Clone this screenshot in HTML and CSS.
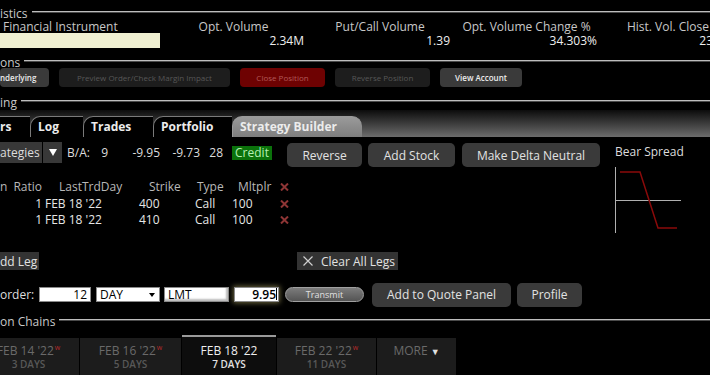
FILE: index.html
```html
<!DOCTYPE html>
<html lang="en">
<head>
  <meta charset="UTF-8">
  <meta name="viewport" content="width=device-width,initial-scale=1">
  <title>Strategy Builder</title>
  <link rel="stylesheet" href="styles.css">
</head>
<body>
  <div class="app">
    <!-- statistics strip -->
    <div class="sec sec-stats"><span>istics</span><i class="rule"></i></div>
    <div class="stats">
      <div class="stat stat-first">
        <div class="stat-label">Financial Instrument</div>
        <div class="instr-box"></div>
      </div>
      <div class="stat">
        <div class="stat-label">Opt. Volume</div>
        <div class="stat-val">2.34M</div>
      </div>
      <div class="stat">
        <div class="stat-label">Put/Call Volume</div>
        <div class="stat-val">1.39</div>
      </div>
      <div class="stat">
        <div class="stat-label">Opt. Volume Change %</div>
        <div class="stat-val">34.303%</div>
      </div>
      <div class="stat">
        <div class="stat-label">Hist. Vol. Close</div>
        <div class="stat-val">23.6%</div>
      </div>
    </div>

    <!-- actions -->
    <div class="sec sec-actions"><span>ons</span><i class="rule"></i></div>
    <div class="actions">
      <button class="act act-on w-und">nderlying</button>
      <button class="act act-off w-prev">Preview Order/Check Margin Impact</button>
      <button class="act act-close">Close Position</button>
      <button class="act act-off w-rev">Reverse Position</button>
      <button class="act act-on w-view">View Account</button>
    </div>

    <!-- trading -->
    <div class="sec sec-trading"><span>ing</span><i class="rule"></i></div>
    <div class="tabs">
      <div class="tab tab-cut">rs</div>
      <div class="tab w-log">Log</div>
      <div class="tab w-trades">Trades</div>
      <div class="tab w-port">Portfolio</div>
      <div class="tab active">Strategy Builder</div>
    </div>

    <div class="builder">
      <div class="builder-main">
        <div class="strat-row">
          <div class="drop">ategies</div>
          <div class="drop-arrow">
            <svg width="8" height="7" viewBox="0 0 8 7"><polygon points="0,0 8,0 4,7" fill="#fff"/></svg>
          </div>
          <span class="ba-label">B/A:</span>
          <span class="ba ba-1">9</span>
          <span class="ba ba-2">-9.95</span>
          <span class="ba ba-3">-9.73</span>
          <span class="ba ba-4">28</span>
          <span class="credit">Credit</span>
          <button class="sb-btn w-reverse">Reverse</button>
          <button class="sb-btn w-stock">Add Stock</button>
          <button class="sb-btn w-delta">Make Delta Neutral</button>
        </div>

        <div class="legs">
          <div class="lh">n</div>
          <div class="lh r">Ratio</div>
          <div class="lh h-date">LastTrdDay</div>
          <div class="lh h-strike">Strike</div>
          <div class="lh h-type">Type</div>
          <div class="lh h-mult">Mltplr</div>
          <div class="lh"><svg class="del" width="9" height="8" viewBox="0 0 9 8"><path d="M1 0.5 L8 7.5 M8 0.5 L1 7.5" stroke="#8e3535" stroke-width="2"/></svg></div>

          <div></div>
          <div class="r">1</div>
          <div class="v-date">FEB 18 '22</div>
          <div>400</div>
          <div>Call</div>
          <div>100</div>
          <div><svg class="del" width="9" height="8" viewBox="0 0 9 8"><path d="M1 0.5 L8 7.5 M8 0.5 L1 7.5" stroke="#8e3535" stroke-width="2"/></svg></div>

          <div></div>
          <div class="r">1</div>
          <div class="v-date">FEB 18 '22</div>
          <div>410</div>
          <div>Call</div>
          <div>100</div>
          <div><svg class="del" width="9" height="8" viewBox="0 0 9 8"><path d="M1 0.5 L8 7.5 M8 0.5 L1 7.5" stroke="#8e3535" stroke-width="2"/></svg></div>
        </div>
      </div>

      <div class="profile">
        <div class="profile-title">Bear Spread</div>
        <svg width="72" height="70" viewBox="0 0 72 70">
          <line x1="3.5" y1="1" x2="3.5" y2="67" stroke="#b0b0b0" stroke-width="1"/>
          <line x1="4" y1="34.5" x2="69" y2="34.5" stroke="#b0b0b0" stroke-width="1"/>
          <polyline points="8,6 28,6 46,62 65,62" fill="none" stroke="#8a0a0a" stroke-width="1.5"/>
        </svg>
      </div>
    </div>

    <div class="leg-row">
      <button class="leg-btn">dd Leg</button>
      <button class="leg-btn clear">
        <svg width="10" height="10" viewBox="0 0 10 10"><path d="M0.5 0.5 L9.5 9.5 M9.5 0.5 L0.5 9.5" stroke="#d0d0d0" stroke-width="1.2"/></svg>
        Clear All Legs
      </button>
    </div>

    <div class="order-row">
      <span class="order-label">order:</span>
      <div class="fld fld-qty">12</div>
      <div class="fld fld-tif">DAY
        <svg width="6" height="4" viewBox="0 0 6 4"><polygon points="0,0 6,0 3,4" fill="#000"/></svg>
      </div>
      <div class="fld fld-type">LMT</div>
      <div class="fld fld-price">9.95<i class="caret"></i></div>
      <button class="transmit">Transmit</button>
      <button class="sb-btn w-quote">Add to Quote Panel</button>
      <button class="sb-btn w-profile">Profile</button>
    </div>

    <!-- option chains -->
    <div class="sec sec-chains"><span>on Chains</span><i class="rule"></i></div>
    <div class="expiries">
      <div class="exp w-101">
        <div class="exp-date">FEB 14 '22<sup class="wk">w</sup></div>
        <div class="exp-days">3 DAYS</div>
      </div>
      <div class="exp w-101">
        <div class="exp-date">FEB 16 '22<sup class="wk">w</sup></div>
        <div class="exp-days">5 DAYS</div>
      </div>
      <div class="exp exp-active">
        <div class="exp-date">FEB 18 '22</div>
        <div class="exp-days">7 DAYS</div>
      </div>
      <div class="exp w-99">
        <div class="exp-date">FEB 22 '22<sup class="wk">w</sup></div>
        <div class="exp-days">11 DAYS</div>
      </div>
      <div class="exp exp-more">
        <div class="exp-date">MORE <span class="more-arrow">&#9660;</span></div>
      </div>
    </div>
  </div>
</body>
</html>
```

FILE: styles.css
```css
body { margin: 0; background: #000; color: #ddd; font-family: "Open Sans", "Liberation Sans", sans-serif; font-size: 12px; overflow: hidden; }
.app { width: 710px; height: 375px; overflow: hidden; }
button { font-family: inherit; padding: 0; border: 0; cursor: pointer; }

/* section titles with a rule */
.sec { display: flex; align-items: center; gap: 4px; height: 14px; color: #c8c8c8; white-space: nowrap; }
.sec span { margin-top: 2px; }
.sec .rule { flex: 1; height: 0; border-top: 1px solid #bdbdbd; border-bottom: 1px solid #4a4a4a; }
.sec-stats { margin-top: 5px; }
.sec-actions { margin-top: 6px; }
.sec-trading { margin-top: 7px; }
.sec-chains { margin-top: 6px; }

/* statistics */
.stats { display: grid; grid-template-columns: 160px 147px 146px 147px 136px; }
.stat-label { height: 14px; line-height: 15px; text-align: center; color: #c8c8c8; white-space: nowrap; }
.stat-first .stat-label { text-align: left; padding-left: 3px; }
.stat-val { height: 15px; line-height: 15px; text-align: right; padding-right: 3px; color: #eee; }
.instr-box { height: 15px; background: #f0f0d2; }

/* action buttons */
.actions { display: flex; gap: 10px; height: 19px; }
.act { height: 19px; border-radius: 4px; font-size: 8px; white-space: nowrap; }
.act-on { background: #3a3a3a; color: #ececec; font-weight: 600; }
.act-off { background: #1d1d1d; color: #575757; }
.act-close { background: #6e0202; color: #b25858; width: 85px; }
.w-und { width: 49px; text-align: left; }
.w-prev { width: 171px; }
.w-rev { width: 95px; }
.w-view { width: 82px; }

/* tabs */
.tabs { display: flex; align-items: flex-end; height: 27px; margin-top: 2px; background: linear-gradient(#0c0c0c, #6c6c6c); }
.tab { height: 21px; line-height: 20px; padding: 0 0 0 7px; box-sizing: border-box; background: #000; color: #ececec; font-weight: bold; border-top: 1px solid #7a7a7a; border-left: 1px solid #7a7a7a; border-top-left-radius: 10px; white-space: nowrap; }
.tab-cut { width: 30px; padding: 0; border-left: 0; border-top-left-radius: 0; }
.w-log { width: 53px; }
.w-trades { width: 70px; }
.w-port { width: 79px; }
.tab.active { width: 130px; background: linear-gradient(#9a9a9a, #7e7e7e); border-color: #9a9a9a; border-top-right-radius: 10px; }

/* strategy builder */
.builder { display: grid; grid-template-columns: 612px 98px; margin-top: 5px; }
.strat-row { display: flex; align-items: flex-start; height: 25px; }
.drop { width: 42px; height: 21px; line-height: 21px; background: #383838; color: #ddd; white-space: nowrap; }
.drop-arrow { width: 19px; height: 21px; margin-left: 1px; background: #383838; display: flex; align-items: center; justify-content: center; }
.ba-label, .ba { height: 21px; line-height: 21px; color: #ddd; }
.ba-label { width: 25px; margin-left: 5px; }
.ba { text-align: right; }
.ba-1 { width: 16px; }
.ba-2 { width: 52px; }
.ba-3 { width: 40px; }
.ba-4 { width: 23px; }
.credit { margin: 4px 0 0 9px; width: 40px; height: 14px; line-height: 14px; text-align: center; background: #0b720b; color: #b4f0b4; }
.sb-btn { height: 24px; margin-top: 1px; border-radius: 5px; background: #3a3a3a; color: #e2e2e2; font-size: 12px; white-space: nowrap; }
.w-reverse { width: 75px; margin-left: 15px; }
.w-stock { width: 87px; margin-left: 6px; }
.w-delta { width: 138px; margin-left: 7px; }

.legs { display: grid; grid-template-columns: 8px 34px 97px 56px 37px 48px 10px; grid-auto-rows: 16px; margin-top: 13px; color: #e6e6e6; line-height: 16px; white-space: nowrap; }
.legs .lh { height: 13px; line-height: 13px; color: #b8b8b8; }
.legs .r { text-align: right; }
.h-date { padding-left: 17px; }
.h-strike { padding-left: 10px; }
.h-type { padding-left: 2px; }
.h-mult { padding-left: 6px; }
.v-date { padding-left: 3px; }
.del { display: block; margin-top: 4px; }
.lh .del { margin-top: 3px; }

.profile-title { margin: 3px 0 0 3px; height: 14px; line-height: 14px; color: #ddd; white-space: nowrap; }
.profile svg { display: block; margin-top: 7px; }

/* legs buttons */
.leg-row { display: flex; height: 18px; margin-top: 16px; }
.leg-btn { height: 18px; background: #333; color: #e2e2e2; font-size: 12px; white-space: nowrap; }
.leg-btn:first-child { width: 39px; text-align: left; }
.leg-btn.clear { width: 101px; margin-left: 258px; display: flex; align-items: center; gap: 8px; padding-left: 6px; }

/* order entry */
.order-row { display: flex; align-items: center; height: 25px; margin-top: 12px; }
.order-label { width: 33px; color: #ddd; }
.fld { height: 15px; box-sizing: border-box; line-height: 13px; background: #fff; color: #000; border: 1px solid #8a8a8a; white-space: nowrap; }
.fld-qty { width: 52px; margin-left: 6px; text-align: right; padding-right: 3px; }
.fld-tif { width: 64px; margin-left: 5px; padding: 0 4px 0 3px; display: flex; align-items: center; justify-content: space-between; }
.fld-type { width: 65px; margin-left: 4px; padding-left: 3px; box-shadow: inset -2px -2px 2px #bbb; }
.fld-price { width: 45px; margin-left: 5px; text-align: right; padding-right: 1px; font-weight: 600; box-shadow: 0 0 5px 1px rgba(190, 180, 110, 0.55); }
.caret { display: inline-block; width: 0; height: 12px; border-left: 1px solid #000; vertical-align: top; }
.transmit { width: 79px; height: 15px; margin-left: 6px; border-radius: 8px; border: 1px solid #a0a0a0; background: linear-gradient(#7c7c7c, #545454); color: #e0e0e0; font-size: 9px; }
.w-quote { width: 139px; margin: 0 0 0 8px; }
.w-profile { width: 65px; margin: 0 0 0 6px; }

/* expiries */
.expiries { display: flex; align-items: flex-start; gap: 1px; height: 40px; margin: 8px 0 0 -22px; }
.exp { height: 37px; margin-top: 3px; background: #1c1c1c; text-align: center; white-space: nowrap; }
.w-101 { width: 101px; }
.w-99 { width: 99px; }
.exp-active { width: 94px; height: 38px; margin-top: 0; background: #0d0d0d; border-top: 2px solid #9a9a9a; }
.exp-more { width: 79px; }
.exp-date { margin-top: 6px; height: 14px; line-height: 14px; color: #6a6a6a; }
.exp-days { height: 12px; line-height: 12px; font-size: 10px; font-weight: 600; color: #585858; }
.exp-active .exp-date { margin-top: 7px; color: #efefef; }
.exp-active .exp-days { color: #e0e0e0; }
.wk { font-size: 7px; color: #b52a2a; vertical-align: top; line-height: 8px; margin-left: 1px; }
.more-arrow { font-size: 9px; color: #e0e0e0; }
```
